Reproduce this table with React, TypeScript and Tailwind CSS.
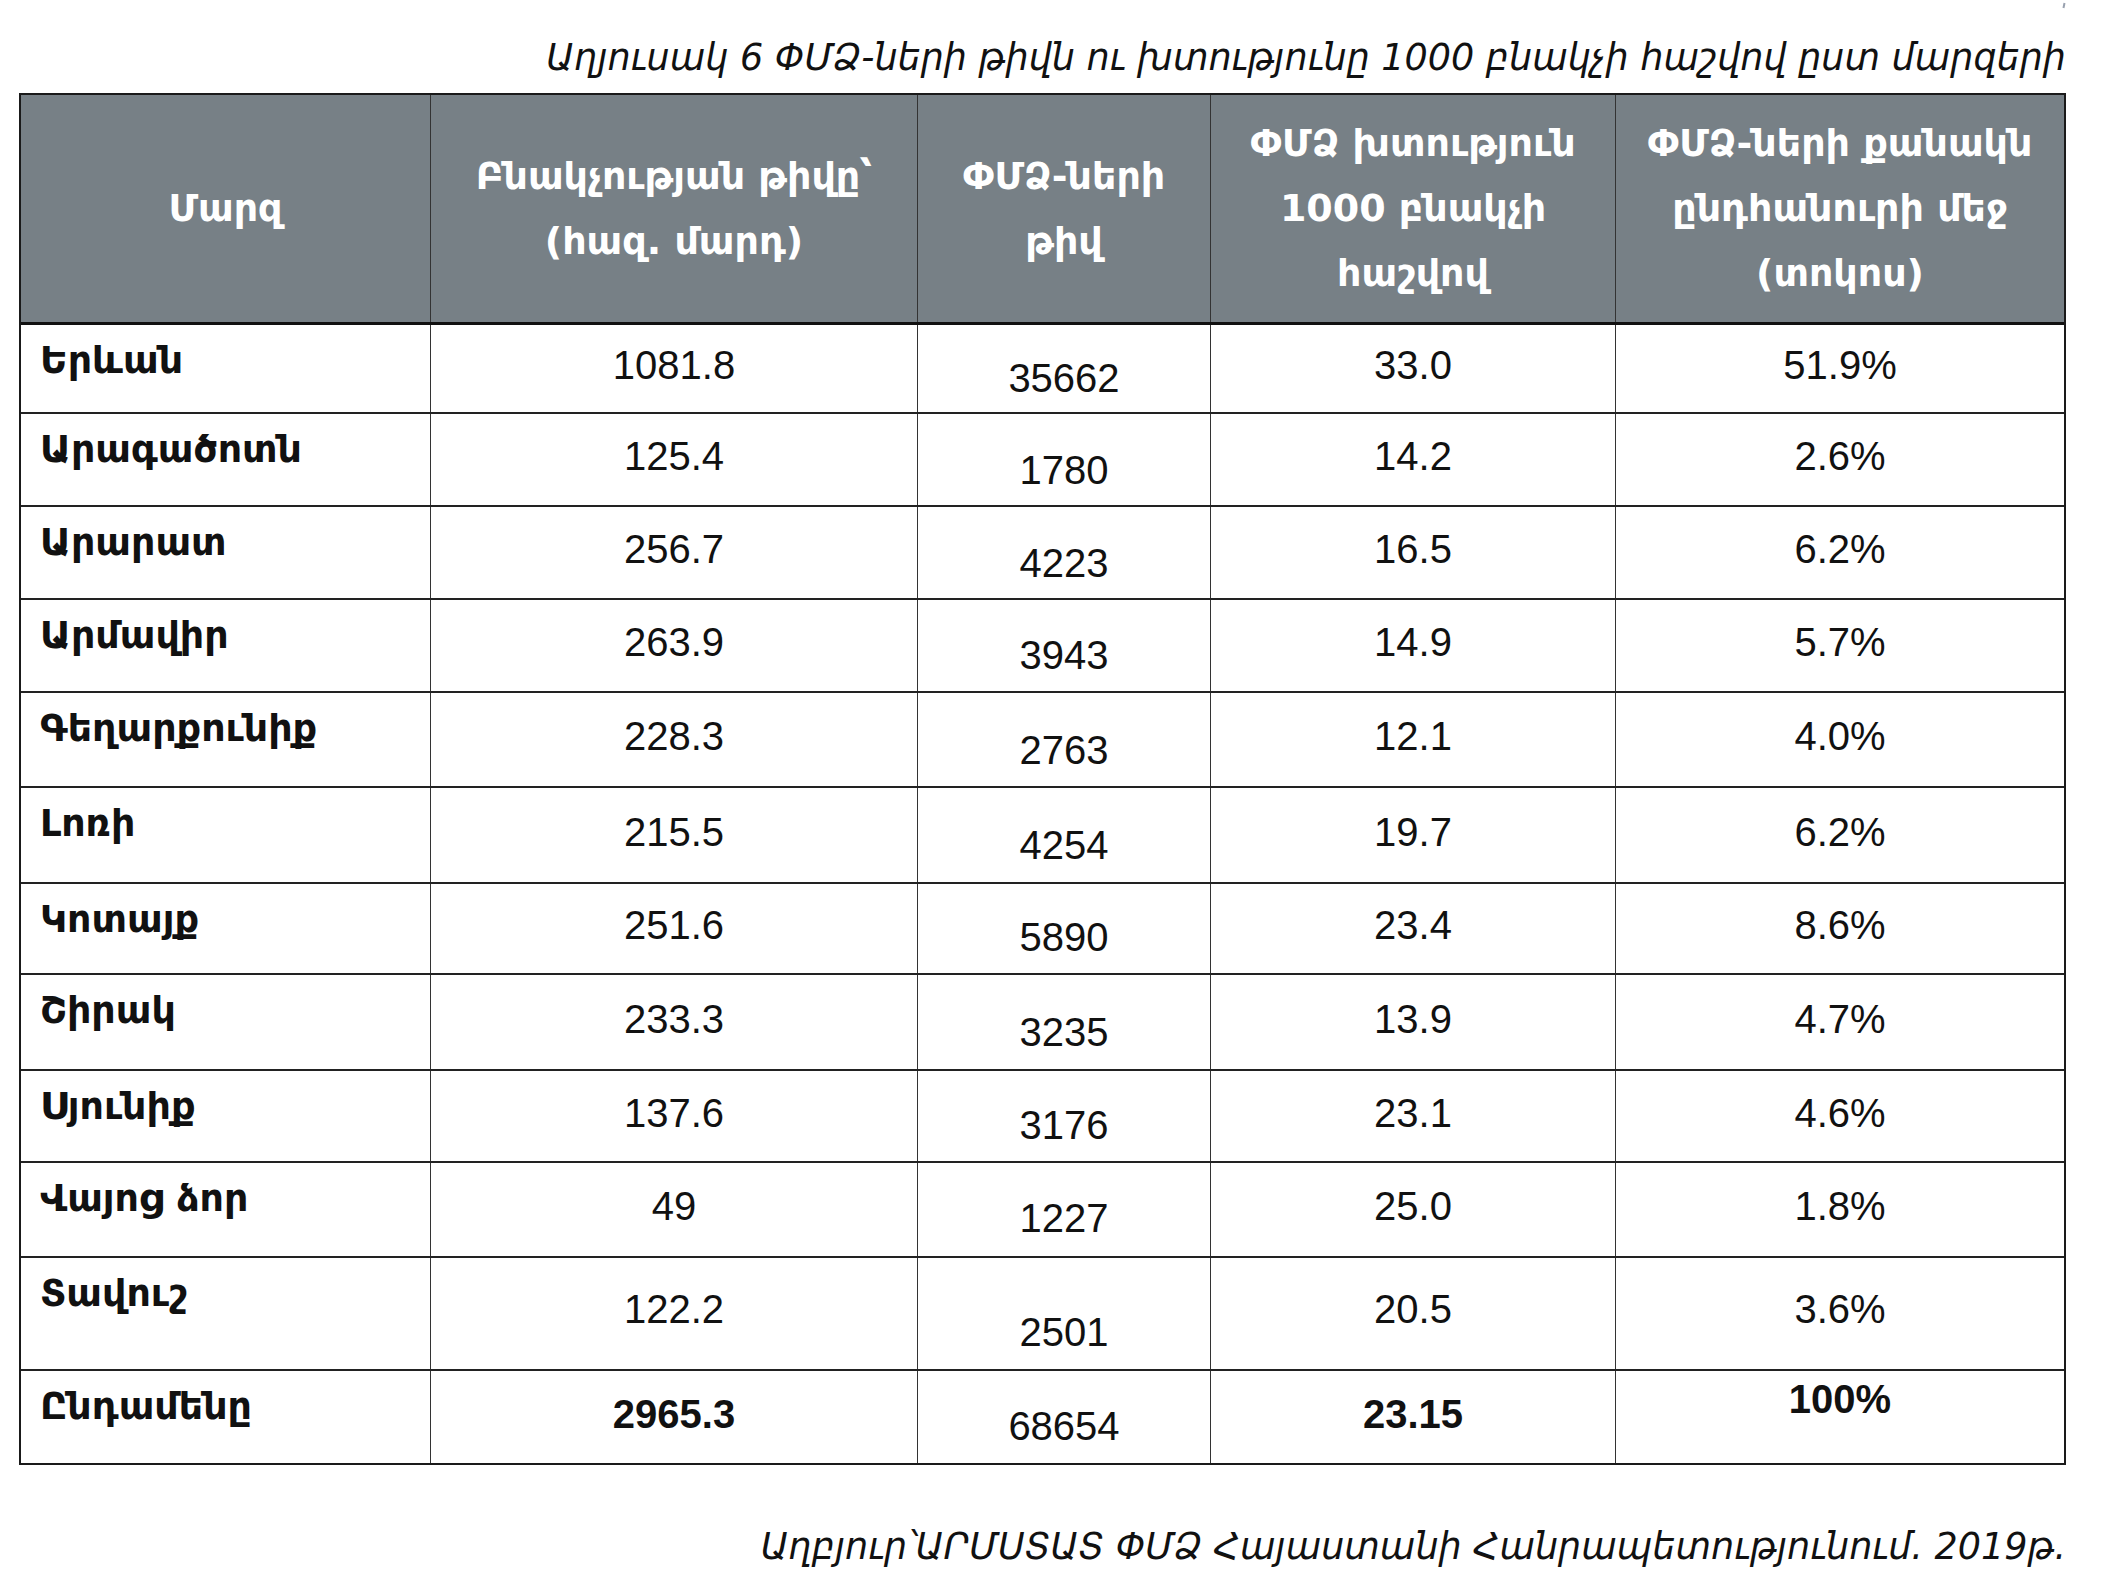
import React from "react";

type Row = {
  name: string;
  pop: string;
  count: string;
  density: string;
  share: string;
  h: string;
  midPad: string;
  countPad: string;
  sharePad?: string;
  bold?: boolean;
  last?: boolean;
};

const rows: Row[] = [
  { name: "Երևան", pop: "1081.8", count: "35662", density: "33.0", share: "51.9%", h: "h-[89px]", midPad: "pb-[7px]", countPad: "pt-[18px]" },
  { name: "Արագածոտն", pop: "125.4", count: "1780", density: "14.2", share: "2.6%", h: "h-[93px]", midPad: "pb-[7px]", countPad: "pt-[20px]" },
  { name: "Արարատ", pop: "256.7", count: "4223", density: "16.5", share: "6.2%", h: "h-[93px]", midPad: "pb-[7px]", countPad: "pt-[20px]" },
  { name: "Արմավիր", pop: "263.9", count: "3943", density: "14.9", share: "5.7%", h: "h-[93px]", midPad: "pb-[7px]", countPad: "pt-[18px]" },
  { name: "Գեղարքունիք", pop: "228.3", count: "2763", density: "12.1", share: "4.0%", h: "h-[95px]", midPad: "pb-[7px]", countPad: "pt-[20px]" },
  { name: "Լոռի", pop: "215.5", count: "4254", density: "19.7", share: "6.2%", h: "h-[96px]", midPad: "pb-[7px]", countPad: "pt-[20px]" },
  { name: "Կոտայք", pop: "251.6", count: "5890", density: "23.4", share: "8.6%", h: "h-[91px]", midPad: "pb-[8px]", countPad: "pt-[16px]" },
  { name: "Շիրակ", pop: "233.3", count: "3235", density: "13.9", share: "4.7%", h: "h-[96px]", midPad: "pb-[7px]", countPad: "pt-[20px]" },
  { name: "Սյունիք", pop: "137.6", count: "3176", density: "23.1", share: "4.6%", h: "h-[92px]", midPad: "pb-[7px]", countPad: "pt-[18px]" },
  { name: "Վայոց ձոր", pop: "49", count: "1227", density: "25.0", share: "1.8%", h: "h-[95px]", midPad: "pb-[8px]", countPad: "pt-[16px]" },
  { name: "Տավուշ", pop: "122.2", count: "2501", density: "20.5", share: "3.6%", h: "h-[113px]", midPad: "pb-[9px]", countPad: "pt-[37px]" },
  { name: "Ընդամենը", pop: "2965.3", count: "68654", density: "23.15", share: "100%", h: "h-[92px]", midPad: "pb-[6px]", countPad: "pt-[18px]", sharePad: "pb-[36px]", bold: true, last: true },
];

const arm = "font-['DejaVu_Sans',sans-serif]";
const num = "font-['Liberation_Sans',Arial,sans-serif]";

export default function App() {
  return (
    <div className="relative min-h-screen w-[2109px] bg-white text-[#111]">
      <span className="absolute left-[2063px] top-[3px] h-[5px] w-[2px] rotate-12 bg-gray-400"></span>

      {/* Caption */}
      <div className={`pt-[36px] pr-[43px] text-right text-[36.5px] italic leading-[44px] ${arm}`}>
        Աղյուսակ 6 ՓՄՁ-ների թիվն ու խտությունը 1000 բնակչի հաշվով ըստ մարզերի
      </div>

      {/* Table */}
      <div className="ml-[19px] mt-[13px] w-[2047px] border-2 border-[#1a1a1a]">
        <div className={`grid h-[230px] grid-cols-[410px_487px_293px_405px_448px] border-b-[3px] border-[#111] bg-[#778086] text-[38px] font-bold leading-[65px] text-white ${arm}`}>
          <div className="flex items-center justify-center border-r border-[#333] text-center">Մարզ</div>
          <div className="flex items-center justify-center border-r border-[#333] text-center">
            Բնակչության թիվը՝<br />(հազ. մարդ)
          </div>
          <div className="flex items-center justify-center border-r border-[#333] text-center">
            ՓՄՁ-ների<br />թիվ
          </div>
          <div className="flex items-center justify-center border-r border-[#333] text-center">
            ՓՄՁ խտություն<br />1000 բնակչի<br />հաշվով
          </div>
          <div className="flex items-center justify-center text-center">
            ՓՄՁ-ների քանակն<br />ընդհանուրի մեջ<br />(տոկոս)
          </div>
        </div>

        {rows.map((r) => (
          <div
            key={r.name}
            className={`grid grid-cols-[410px_487px_293px_405px_448px] ${r.h} ${r.last ? "" : "border-b-2 border-[#222]"}`}
          >
            <div className={`border-r border-[#333] pl-[19px] pt-[13px] text-[38px] font-bold leading-[44px] ${arm}`}>
              {r.name}
            </div>
            <div className={`flex items-center justify-center border-r border-[#333] text-[40px] leading-[46px] ${num} ${r.midPad} ${r.bold ? "font-bold" : ""}`}>
              {r.pop}
            </div>
            <div className={`flex items-center justify-center border-r border-[#333] text-[40px] leading-[46px] ${num} ${r.countPad}`}>
              {r.count}
            </div>
            <div className={`flex items-center justify-center border-r border-[#333] text-[40px] leading-[46px] ${num} ${r.midPad} ${r.bold ? "font-bold" : ""}`}>
              {r.density}
            </div>
            <div className={`flex items-center justify-center text-[40px] leading-[46px] ${num} ${r.sharePad ?? r.midPad} ${r.bold ? "font-bold" : ""}`}>
              {r.share}
            </div>
          </div>
        ))}
      </div>

      {/* Source */}
      <div className={`mt-[60px] pr-[43px] text-right text-[36.5px] italic leading-[44px] ${arm}`}>
        Աղբյուր՝ԱՐՄՍՏԱՏ ՓՄՁ Հայաստանի Հանրապետությունում. 2019թ.
      </div>
    </div>
  );
}
